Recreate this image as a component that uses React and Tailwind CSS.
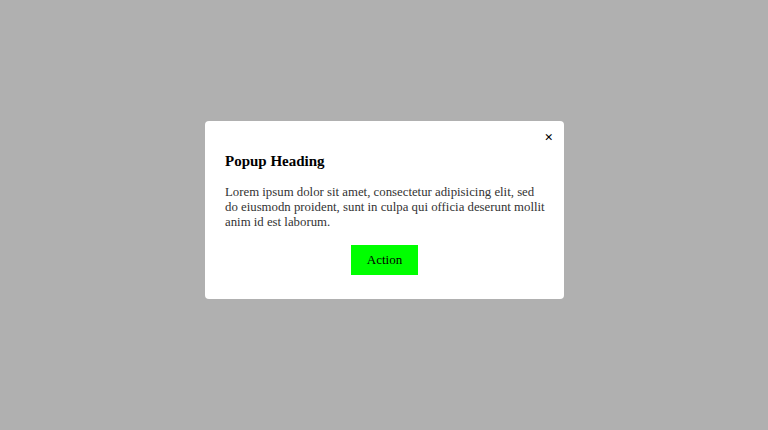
export default function App() {
  return (
    <div className="w-full h-[430px] bg-[#b0b0b0] flex items-center justify-center pb-[10px] pl-px" style={{ fontFamily: '"Liberation Serif", serif' }}>
      <div className="relative w-[359px] bg-white rounded-[4px] pl-5 pr-[17px] pt-8 pb-6">
        <button className="absolute right-[11px] top-[9px] text-[15px] leading-none font-bold text-black">×</button>
        <h2 className="text-[15px] font-bold text-black leading-[17px]">Popup Heading</h2>
        <p className="mt-[15px] text-[12.8px] leading-[15px] text-[#333]">
          Lorem ipsum dolor sit amet, consectetur adipisicing elit, sed do eiusmodn proident, sunt in culpa qui officia deserunt mollit anim id est laborum.
        </p>
        <div className="mt-[15px] flex justify-center pr-[3px]">
          <button className="w-[67px] h-[30px] bg-[#00ff00] text-[13px] text-black">Action</button>
        </div>
      </div>
    </div>
  )
}
